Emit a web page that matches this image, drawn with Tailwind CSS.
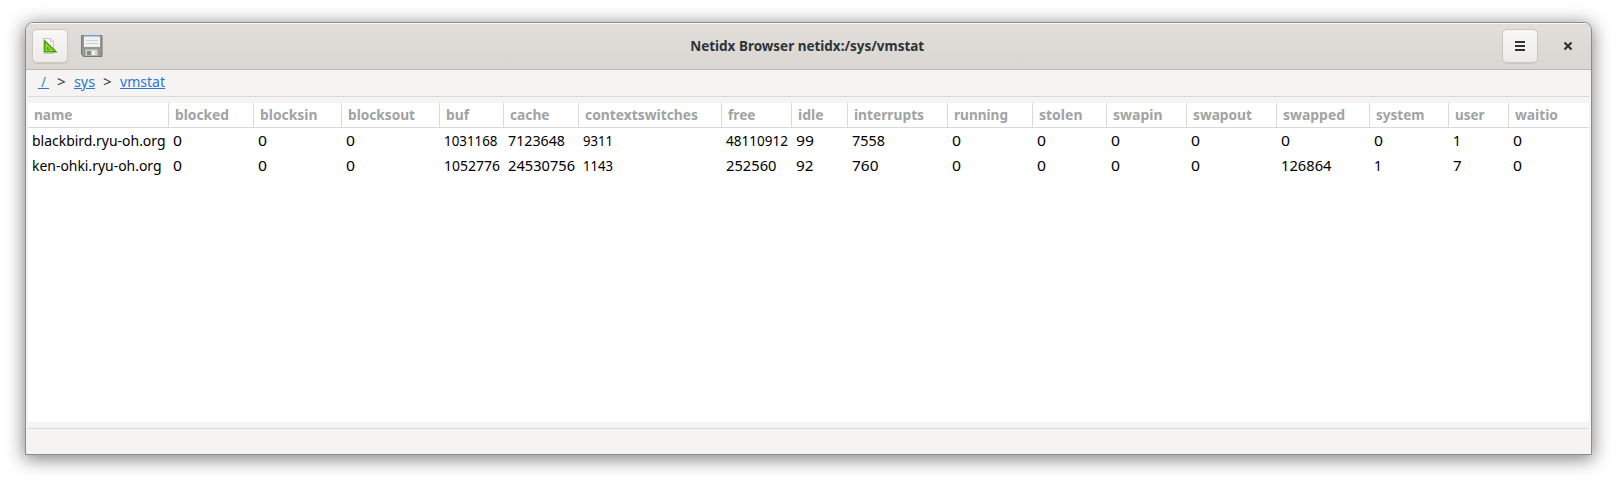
<!DOCTYPE html>
<html lang="en">
<head>
<meta charset="utf-8">
<title>Netidx Browser</title>
<script src="https://cdn.jsdelivr.net/npm/@tailwindcss/browser@4"></script>
</head>
<body class="h-[483px] w-[1617px] overflow-hidden bg-white pt-[22px] pl-[25px] font-['Noto_Sans',sans-serif] text-[15px] text-black">
<main class="flex h-[433px] w-[1567px] flex-col overflow-hidden rounded-t-[8px] border border-[#8c8c8c] bg-[#f5f4f2] shadow-[0_3px_18px_1px_rgba(0,0,0,0.5)]">
  <header class="flex h-[47px] shrink-0 items-center border-b border-[#bfb8b1] bg-linear-to-b from-[#e1dedb] to-[#dad6d2] pr-[6px] pl-[6px] shadow-[inset_0_1px_0_#f9f8f8]">
    <button class="flex h-[34px] w-[36px] items-center justify-center rounded-[5px] border border-[#cdc7c2] bg-linear-to-b from-[#f8f7f6] to-[#edebe9] shadow-[0_1px_1px_rgba(0,0,0,0.08)]" aria-label="Design">
      <svg width="16" height="16" viewBox="0 0 16 16"><path d="M1.500.5h7l3 3v12h-10z" fill="#fafafa" stroke="#c8c8c6"/><path d="M8.500.5v3h3" fill="#e8e8e8" stroke="#c8c8c6"/><path d="M2.800 3v10.800h11.200z" fill="#8ae234" stroke="#4e9a06" stroke-width="1.400"/><path d="M5.500 9v2.500H8z" fill="#e7f7d5" stroke="#4e9a06"/></svg>
    </button>
    <button class="ml-[12px] flex size-[24px] items-center justify-center" aria-label="Save">
      <svg width="22" height="22" viewBox="0 0 22 22"><path d="M1 .5h20v21H2.500L.5 19.500V.5z" fill="#959794" stroke="#777975"/><path d="M3 1h16v11H3z" fill="#f0f0ef"/><path d="M3 0h16v1.500H3z" fill="#729fcf"/><path d="M5 5.500h12M5 8.500h12" stroke="#d0d1cf"/><path d="M4.500 14.500h12v6h-12z" fill="#d3d5d1" stroke="#b5b7b3"/><path d="M6 16h4v4H6z" fill="#888a86"/><path d="M11 16h3v4h-3z" fill="#eee"/></svg>
    </button>
    <h1 class="flex flex-1 justify-center pb-[2px] pl-[9px] leading-[20px] font-bold text-[#2e3436]"><span class="fit inline-block origin-center whitespace-nowrap" data-w="234" data-font="bold">Netidx Browser netidx:/sys/vmstat</span></h1>
    <button class="flex h-[34px] w-[36px] items-center justify-center rounded-[5px] border border-[#cdc7c2] bg-linear-to-b from-[#f8f7f6] to-[#edebe9] shadow-[0_1px_1px_rgba(0,0,0,0.08)]" aria-label="Menu">
      <svg width="10" height="10" viewBox="0 0 10 10"><path d="M0 0h10v2H0zM0 4h10v2H0zM0 8h10v2H0z" fill="#2e3436"/></svg>
    </button>
    <button class="mr-[12px] ml-[25px] flex size-[10px] items-center justify-center" aria-label="Close">
      <svg width="10" height="10" viewBox="0 0 10 10"><path d="M1.500 1.500l7 7M8.500 1.500l-7 7" stroke="#2e3436" stroke-width="2.200"/></svg>
    </button>
  </header>
  <nav class="mx-[2px] flex h-[27px] shrink-0 border-b border-[#dbd8d6] pl-[10px] leading-[22px] text-[#2e3436]">
    <a class="w-[11px] whitespace-pre text-[#2a76d2]"><span class="fit inline-block origin-left underline" data-w="11" data-font="normal">&nbsp;/&nbsp;</span></a>
    <span class="ml-[8px] w-[17px]">&gt;</span>
    <a class="w-[29px] text-[#2a76d2]"><span class="fit inline-block origin-left underline" data-w="21" data-font="normal">sys</span></a>
    <span class="w-[17px]">&gt;</span>
    <a class="text-[#2a76d2]"><span class="fit inline-block origin-left underline" data-w="45" data-font="normal">vmstat</span></a>
  </nav>
  <section class="mx-[2px] mt-[6px] h-[319px] shrink-0 bg-white">
    <div id="head" class="flex h-[25px] border-b border-[#dbd8d6] leading-[23px] font-bold text-[#a0a3a3]"></div>
    <div id="rows"></div>
  </section>
  <footer class="mx-[2px] mt-[6px] h-[25px] border-t border-[#dbd8d6]"></footer>
</main>
<script>
// [title, column width, title width, [value, value width], [value, value width]]
const columns = [
  ['name', 141, 38.5, ['blackbird.ryu-oh.org', 133.5], ['ken-ohki.ryu-oh.org', 129.5]],
  ['blocked', 85, 54, ['0', 9], ['0', 9]],
  ['blocksin', 88, 57.5, ['0', 9], ['0', 9]],
  ['blocksout', 98, 67, ['0', 9], ['0', 9]],
  ['buf', 64, 23, ['1031168', 53.5], ['1052776', 56]],
  ['cache', 75, 39.5, ['7123648', 57], ['24530756', 67]],
  ['contextswitches', 143, 113, ['9311', 30], ['1143', 30]],
  ['free', 70, 27.5, ['48110912', 62], ['252560', 50.5]],
  ['idle', 56, 25.5, ['99', 18], ['92', 17.5]],
  ['interrupts', 100, 70, ['7558', 33], ['760', 26.5]],
  ['running', 85, 54, ['0', 9], ['0', 9]],
  ['stolen', 74, 43.5, ['0', 9], ['0', 9]],
  ['swapin', 80, 49.5, ['0', 9], ['0', 9]],
  ['swapout', 90, 59, ['0', 9], ['0', 9]],
  ['swapped', 93, 62, ['0', 9], ['126864', 50.5]],
  ['system', 79, 48.5, ['0', 9], ['1', 8]],
  ['user', 60, 29.5, ['1', 8], ['7', 8.6]],
  ['waitio', 80, 43, ['0', 9], ['0', 9]],
];
function cell(text, target, width, font, cls) {
  const d = document.createElement('div');
  d.className = cls;
  d.style.width = width + 'px';
  const s = document.createElement('span');
  s.className = 'fit inline-block origin-left';
  s.dataset.w = target;
  s.dataset.font = font;
  s.textContent = text;
  d.append(s);
  return d;
}
const head = document.getElementById('head');
columns.forEach((c, i) => head.append(cell(c[0], c[2], c[1], 'bold',
  'shrink-0 whitespace-nowrap pl-[6px] border-[#dbd8d6]' + (i < columns.length - 1 ? ' border-r' : ''))));
for (const r of [3, 4]) {
  const row = document.createElement('div');
  row.className = 'flex h-[25px] leading-[24px]';
  columns.forEach(c => row.append(cell(c[r][0], c[r][1], c[1], 'normal', 'shrink-0 whitespace-nowrap pl-[4px]')));
  document.getElementById('rows').append(row);
}
// Scale each label horizontally to its set width.
const ctx = document.createElement('canvas').getContext('2d');
document.querySelectorAll('.fit').forEach(s => {
  ctx.font = s.dataset.font + ' 15px "Noto Sans"';
  s.style.transform = 'scaleX(' + s.dataset.w / ctx.measureText(s.textContent).width + ')';
});
</script>
</body>
</html>
